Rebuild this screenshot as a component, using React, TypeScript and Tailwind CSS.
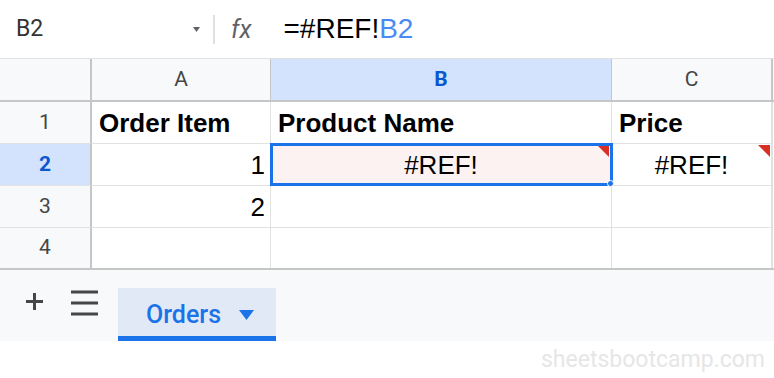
import React from "react";

const Tri = () => (
  <div className="absolute top-[1px] right-[1px] w-[12px] h-[12px] bg-[#d93025] [clip-path:polygon(0_0,100%_0,100%_100%)]" />
);

export default function App() {
  const rowH = "h-[42px] border-b border-[#e1e1e1]";
  return (
    <div className="w-[774px] h-[378px] bg-white overflow-hidden relative font-['Liberation_Sans',Arial,sans-serif]">
      {/* formula bar */}
      <div className="h-[59px] border-b border-[#e1e1e1] flex items-center">
        <div className="w-[213px] flex items-center justify-between pl-[16px] pr-[13px]">
          <span className="font-['Roboto',sans-serif] text-[23px] text-[#333]">B2</span>
          <svg width="7" height="5" viewBox="0 0 7 5"><path d="M0 0 L7 0 L3.5 5 Z" fill="#5f6368" /></svg>
        </div>
        <div className="w-[2px] h-[29px] bg-[#e0e0e0]" />
        <span className="ml-[16px] italic font-['Roboto',sans-serif] text-[25px] text-[#5f6368] leading-none">fx</span>
        <span className="ml-[32px] text-[28px] text-black leading-none">
          =#REF!<span className="text-[#4a8af4]">B2</span>
        </span>
      </div>

      {/* header row */}
      <div className="flex h-[43px] border-b-2 border-[#c4c7c5] bg-[#f8f9fa] font-['Roboto',sans-serif] text-[21px] text-[#444746]">
        <div className="w-[92px] border-r-2 border-[#c4c7c5]" />
        <div className="w-[179px] border-r border-[#c4c7c5] flex items-center justify-center">A</div>
        <div className="w-[341px] border-r border-[#c4c7c5] flex items-center justify-center bg-[#d3e3fd] text-[#0b57d0] font-bold">B</div>
        <div className="w-[161px] border-r-2 border-[#c4c7c5] flex items-center justify-center">C</div>
      </div>

      {/* row 1 */}
      <div className="flex">
        <div className={`w-[92px] ${rowH} border-r-2 border-r-[#c4c7c5] bg-[#f8f9fa] flex items-center justify-center font-['Roboto',sans-serif] text-[21px] text-[#444746]`}>1</div>
        <div className={`w-[179px] ${rowH} border-r flex items-center pl-[7px] pt-[2px] text-[26px] font-bold text-black`}>Order Item</div>
        <div className={`w-[341px] ${rowH} border-r flex items-center pl-[7px] pt-[2px] text-[26px] font-bold text-black`}>Product Name</div>
        <div className={`w-[161px] ${rowH} border-r-2 flex items-center pl-[7px] pt-[2px] text-[26px] font-bold text-black`}>Price</div>
      </div>

      {/* row 2 */}
      <div className="flex">
        <div className={`w-[92px] ${rowH} border-r-2 border-r-[#c4c7c5] bg-[#d3e3fd] flex items-center justify-center font-['Roboto',sans-serif] text-[21px] font-bold text-[#0b57d0]`}>2</div>
        <div className={`w-[179px] ${rowH} border-r flex items-center justify-end pr-[5px] pt-[2px] text-[26px] text-black`}>1</div>
        <div className={`w-[341px] ${rowH} border-r relative flex items-center justify-center pt-[2px] text-[26px] text-black bg-[#fcf2f1]`}>
          #REF!
          <div className="absolute -left-[1px] -top-[1px] -right-[2px] -bottom-[1px] border-[3px] border-[#1a73e8]" />
          <div className="absolute top-[2px] right-[2px] w-[11px] h-[11px] bg-[#d93025] [clip-path:polygon(0_0,100%_0,100%_100%)]" />
          <div className="absolute -right-[3px] -bottom-[2px] w-[7px] h-[7px] rounded-full bg-[#1a73e8] border border-white" />
        </div>
        <div className={`w-[161px] ${rowH} border-r-2 relative flex items-center justify-center pt-[2px] text-[26px] text-black`}>
          #REF!
          <Tri />
        </div>
      </div>

      {/* row 3 */}
      <div className="flex">
        <div className={`w-[92px] ${rowH} border-r-2 border-r-[#c4c7c5] bg-[#f8f9fa] flex items-center justify-center font-['Roboto',sans-serif] text-[21px] text-[#444746]`}>3</div>
        <div className={`w-[179px] ${rowH} border-r flex items-center justify-end pr-[5px] pt-[2px] text-[26px] text-black`}>2</div>
        <div className={`w-[341px] ${rowH} border-r`} />
        <div className={`w-[161px] ${rowH} border-r-2`} />
      </div>

      {/* row 4 */}
      <div className="flex border-b-2 border-[#c4c7c5]">
        <div className="w-[92px] h-[40px] border-r-2 border-[#c4c7c5] bg-[#f8f9fa] flex items-center justify-center font-['Roboto',sans-serif] text-[21px] text-[#444746]">4</div>
        <div className="w-[179px] h-[40px] border-r border-[#e1e1e1]" />
        <div className="w-[341px] h-[40px] border-r border-[#e1e1e1]" />
        <div className="w-[161px] h-[40px] border-r-2 border-[#e1e1e1]" />
      </div>

      {/* bottom bar */}
      <div className="h-[71px] bg-[#f8f9fa] flex items-end">
        <div className="self-start mt-[22px] ml-[25px]">
          <svg width="19" height="19" viewBox="0 0 19 19">
            <path d="M9.5 1 V18 M1 9.5 H18" stroke="#444746" strokeWidth="3" fill="none" />
          </svg>
        </div>
        <div className="self-start mt-[20px] ml-[27px]">
          <svg width="27" height="26" viewBox="0 0 27 26">
            <path d="M0 2 H27 M0 13 H27 M0 24 H27" stroke="#444746" strokeWidth="2.8" fill="none" />
          </svg>
        </div>
        <div className="ml-[20px] w-[158px] h-[53px] bg-[#e1e9f7] border-b-[5px] border-[#1a73e8] flex items-center pl-[28px] pt-[5px]">
          <span className="font-['Roboto',sans-serif] font-medium text-[25px] text-[#1a73e8] leading-none">Orders</span>
          <svg className="ml-[18px]" width="15" height="10" viewBox="0 0 15 10">
            <path d="M0 0 H15 L7.5 10 Z" fill="#1a73e8" />
          </svg>
        </div>
      </div>

      <div className="flex justify-end pr-[9px] pt-[2px]">
        <span className="font-['Roboto',sans-serif] text-[23px] text-[#e6e6e6]">sheetsbootcamp.com</span>
      </div>
    </div>
  );
}
